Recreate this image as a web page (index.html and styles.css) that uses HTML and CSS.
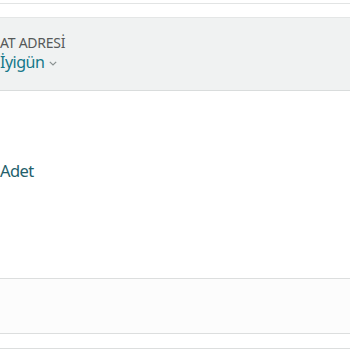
FILE: index.html
```html
<!DOCTYPE html>
<html lang="tr">
<head>
<meta charset="utf-8">
<link rel="stylesheet" href="styles.css">
</head>
<body>
<div class="page">
  <div class="top-gap"></div>
  <div class="spacer"></div>
  <section class="address">
    <div class="address-label">AT ADRESİ</div>
    <div class="address-name">İyigün <span class="chev"><svg width="8" height="5" viewBox="0 0 8 5"><path d="M0.8 0.8 L4 4 L7.2 0.8" fill="none" stroke="#8a9191" stroke-width="1.2"/></svg></span></div>
  </section>
  <section class="qty">
    <div class="qty-label">Adet</div>
  </section>
  <section class="panel"></section>
  <div class="gap"></div>
</div>
</body>
</html>
```
FILE: styles.css
```css
html, body {
  margin: 0;
  padding: 0;
  background: #ffffff;
}
.page {
  width: 350px;
  height: 350px;
  overflow: hidden;
  font-family: "Noto Sans", Roboto, sans-serif;
}
.top-gap {
  height: 3px;
  border-bottom: 1px solid #e2e4e4;
}
.spacer {
  height: 13px;
}
.address {
  height: 74px;
  box-sizing: border-box;
  background: #f0f2f2;
  border-top: 1px solid #e4e6e6;
  border-bottom: 1px solid #d9dcdc;
  padding: 16px 0 0 0;
}
.address-label {
  font-size: 14px;
  line-height: 18px;
  letter-spacing: -0.25px;
  color: #565959;
}
.address-name {
  font-size: 16px;
  line-height: 20px;
  letter-spacing: -0.5px;
  color: #15788a;
  display: flex;
  align-items: center;
  gap: 5px;
}
.chev {
  display: flex;
  margin-top: 2px;
}
.qty {
  height: 187px;
  box-sizing: border-box;
  padding-top: 70px;
}
.qty-label {
  font-size: 16.5px;
  line-height: 20px;
  letter-spacing: -0.6px;
  color: #24606b;
}
.panel {
  height: 56px;
  box-sizing: border-box;
  background: #fcfcfc;
  border-top: 1px solid #dcdede;
  border-bottom: 1px solid #dcdede;
}
.gap {
  height: 14px;
  border-bottom: 1px solid #dcdede;
}
```
